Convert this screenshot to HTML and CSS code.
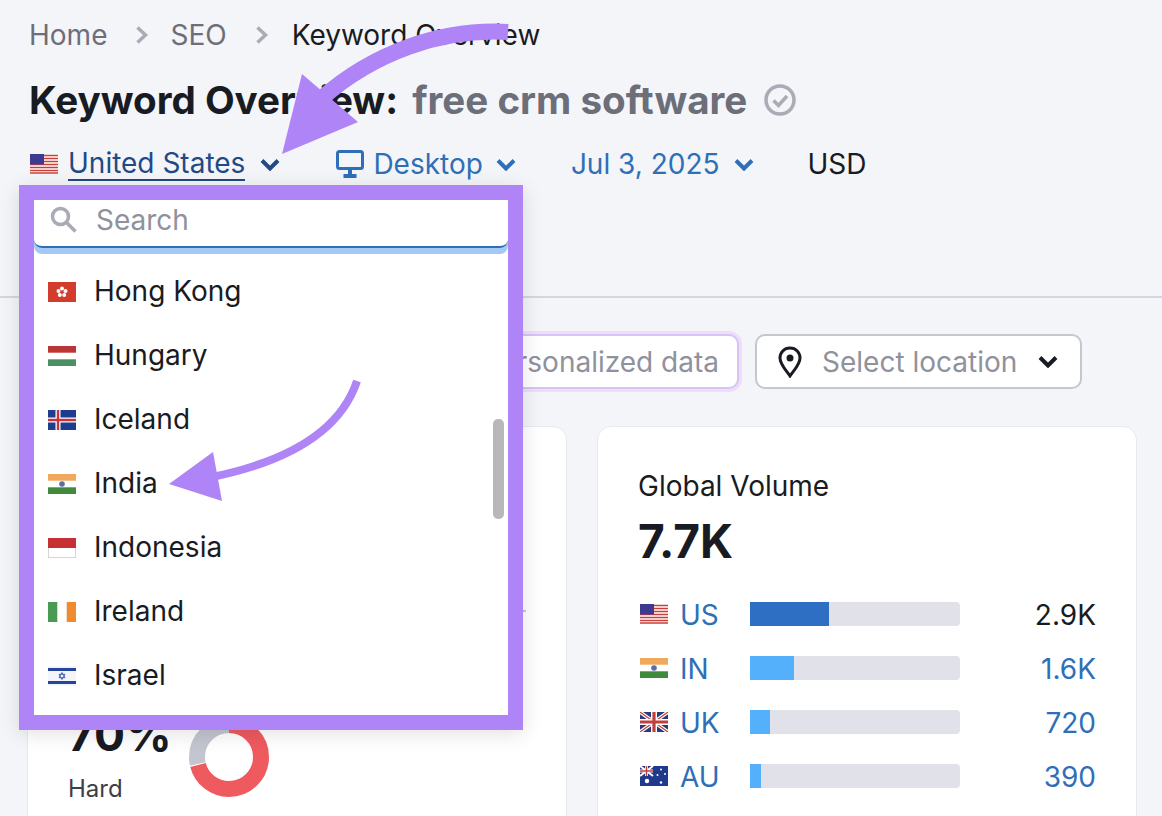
FILE: index.html
```html
<!DOCTYPE html>
<html lang="en">
<head>
    <meta charset="UTF-8">
    <title>Keyword Overview</title>
    <link rel="stylesheet" href="styles.css">
</head>

<body>
    <header class="page-head">
        <nav class="crumbs">
            <span>Home</span>
            <svg class="crumb-sep" viewBox="0 0 14 20"><path d="M2.5 2.500l8 7.500-8 7.500"/></svg>
            <span>SEO</span>
            <svg class="crumb-sep" viewBox="0 0 14 20"><path d="M2.5 2.500l8 7.500-8 7.500"/></svg>
            <span class="crumb-now">Keyword Overview</span>
        </nav>
        <h1 class="title">Keyword Overview: <span class="keyword">free crm software</span>
            <svg class="check" viewBox="0 0 32 32"><circle cx="16" cy="16" r="14"/><path d="M9.500 16.500l5 5 8.500-9.500"/></svg>
        </h1>
        <div class="toolbar">
            <div class="tool tool-country">
                <svg class="flag" viewBox="0 0 28 20"><use href="#flag-us"/></svg>
                <span class="country-name">United States</span>
                <svg class="chev" viewBox="0 0 20 13"><path d="M2 2.500l8 8 8-8"/></svg>
            </div>
            <div class="tool tool-device">
                <svg class="monitor" viewBox="0 0 28 28"><rect x="1.500" y="1.500" width="25" height="17" rx="2"/><path class="monitor-foot" d="M14 19v6M7.500 26h13"/></svg>
                <span>Desktop</span>
                <svg class="chev" viewBox="0 0 20 13"><path d="M2 2.500l8 8 8-8"/></svg>
            </div>
            <div class="tool tool-date">
                <span>Jul 3, 2025</span>
                <svg class="chev" viewBox="0 0 20 13"><path d="M2 2.500l8 8 8-8"/></svg>
            </div>
            <div class="tool tool-currency">USD</div>
        </div>
    </header>

    <main class="content">
        <div class="filters">
            <button class="btn-personal">Get personalized data</button>
            <button class="btn-location">
                <svg class="pin" viewBox="0 0 24 32"><path d="M12 2C6 2 2 6.500 2 12c0 6.500 6 12 10 18 4-6 10-11.500 10-18C22 6.500 18 2 12 2z"/><circle cx="12" cy="12" r="3.500"/></svg>
                <span>Select location</span>
                <svg class="chev-dark" viewBox="0 0 20 13"><path d="M2 2.500l8 8 8-8"/></svg>
            </button>
        </div>

        <div class="cards">
            <section class="card card-left">
                <div class="chart-tick"></div>
                <div class="difficulty">
                    <div>
                        <div class="big-num">70%</div>
                        <div class="hard">Hard</div>
                    </div>
                    <svg class="donut" viewBox="0 0 80 80">
                        <circle class="donut-val" cx="40" cy="40" r="32" pathLength="100" stroke-dasharray="71 29" transform="rotate(-90 40 40)"/>
                        <circle class="donut-bg" cx="40" cy="40" r="32" pathLength="100" stroke-dasharray="28.500 71.500" stroke-dashoffset="-71.500" transform="rotate(-90 40 40)"/>
                    </svg>
                </div>
            </section>

            <section class="card card-right">
                <div class="card-label">Global Volume</div>
                <div class="big-num">7.7K</div>
                <div class="vol-rows">
                    <div class="vol-row">
                        <svg class="flag" viewBox="0 0 28 20"><use href="#flag-us"/></svg>
                        <span class="vol-code">US</span>
                        <div class="vol-bar"><div class="vol-fill vol-fill-main" style="width: 37.600%"></div></div>
                        <span class="vol-num vol-num-dark">2.9K</span>
                    </div>
                    <div class="vol-row">
                        <svg class="flag" viewBox="0 0 28 20"><use href="#flag-in"/></svg>
                        <span class="vol-code">IN</span>
                        <div class="vol-bar"><div class="vol-fill" style="width: 21%"></div></div>
                        <span class="vol-num">1.6K</span>
                    </div>
                    <div class="vol-row">
                        <svg class="flag" viewBox="0 0 28 20"><use href="#flag-uk"/></svg>
                        <span class="vol-code">UK</span>
                        <div class="vol-bar"><div class="vol-fill" style="width: 9.500%"></div></div>
                        <span class="vol-num">720</span>
                    </div>
                    <div class="vol-row">
                        <svg class="flag" viewBox="0 0 28 20"><use href="#flag-au"/></svg>
                        <span class="vol-code">AU</span>
                        <div class="vol-bar"><div class="vol-fill" style="width: 5.200%"></div></div>
                        <span class="vol-num">390</span>
                    </div>
                </div>
            </section>
        </div>
    </main>

    <!-- dropdown with the purple highlight frame -->
    <div class="country-menu">
        <div class="menu-search">
            <svg class="search-icon" viewBox="0 0 30 30"><circle cx="11.500" cy="11.500" r="8"/><path d="M17.500 17.500l9 9"/></svg>
            <span>Search</span>
        </div>
        <ul class="menu-list">
            <li><svg class="flag" viewBox="0 0 28 20"><use href="#flag-hk"/></svg>Hong Kong</li>
            <li><svg class="flag" viewBox="0 0 28 20"><use href="#flag-hu"/></svg>Hungary</li>
            <li><svg class="flag" viewBox="0 0 28 20"><use href="#flag-is"/></svg>Iceland</li>
            <li><svg class="flag" viewBox="0 0 28 20"><use href="#flag-in"/></svg>India</li>
            <li><svg class="flag" viewBox="0 0 28 20"><use href="#flag-id"/></svg>Indonesia</li>
            <li><svg class="flag" viewBox="0 0 28 20"><use href="#flag-ie"/></svg>Ireland</li>
            <li><svg class="flag" viewBox="0 0 28 20"><use href="#flag-il"/></svg>Israel</li>
        </ul>
        <div class="menu-scroll"></div>
    </div>

    <!-- annotation arrows -->
    <svg class="arrows" viewBox="0 0 1162 816">
        <path class="arrow-line" d="M508 32C440 28 372 54 322 98"/>
        <path class="arrow-head" d="M302 74L358 122 282 154z"/>
        <path class="arrow-line arrow-thin" d="M357 381C340 432 285 462 212 477"/>
        <path class="arrow-head" d="M169 484L213 452 222 501z"/>
    </svg>

    <!-- flag sprites -->
    <svg class="sprites">
        <symbol id="flag-us" viewBox="0 0 28 20">
            <rect width="28" height="20" fill="#fff"/>
            <path d="M0 1.500h28M0 4.500h28M0 7.500h28M0 10.500h28M0 13.500h28M0 16.500h28M0 19h28" stroke="#c9403a" stroke-width="1.600"/>
            <rect width="14" height="10.500" fill="#3c3b8f"/>
        </symbol>
        <symbol id="flag-in" viewBox="0 0 28 20">
            <rect width="28" height="20" fill="#fff"/>
            <rect width="28" height="6.700" fill="#f0a85c"/>
            <rect y="13.300" width="28" height="6.700" fill="#3f8a3c"/>
            <circle cx="14" cy="10" r="2.800" fill="#5a6fa8"/>
        </symbol>
        <symbol id="flag-uk" viewBox="0 0 28 20">
            <rect width="28" height="20" fill="#2b3a7c"/>
            <path d="M0 0l28 20M28 0L0 20" stroke="#fff" stroke-width="3.500"/>
            <path d="M0 0l28 20M28 0L0 20" stroke="#c2403c" stroke-width="1.200"/>
            <path d="M14 0v20M0 10h28" stroke="#fff" stroke-width="6"/>
            <path d="M14 0v20M0 10h28" stroke="#c2403c" stroke-width="3.200"/>
        </symbol>
        <symbol id="flag-au" viewBox="0 0 28 20">
            <rect width="28" height="20" fill="#1f3a8a"/>
            <path d="M0 0l13 10M13 0L0 10" stroke="#fff" stroke-width="2"/>
            <path d="M6.500 0v10M0 5h13" stroke="#fff" stroke-width="3"/>
            <path d="M6.500 0v10M0 5h13" stroke="#c2403c" stroke-width="1.500"/>
            <circle cx="7" cy="15" r="2.200" fill="#fff"/>
            <circle cx="21" cy="3.500" r="1" fill="#fff"/>
            <circle cx="25" cy="8" r="1" fill="#fff"/>
            <circle cx="17.500" cy="9" r="1" fill="#fff"/>
            <circle cx="21" cy="16.500" r="1.200" fill="#fff"/>
        </symbol>
        <symbol id="flag-hk" viewBox="0 0 28 20">
            <rect width="28" height="20" fill="#d33c2c"/>
            <circle cx="14" cy="6.500" r="2" fill="#fff"/>
            <circle cx="10.500" cy="9" r="2" fill="#fff"/>
            <circle cx="17.500" cy="9" r="2" fill="#fff"/>
            <circle cx="11.800" cy="13" r="2" fill="#fff"/>
            <circle cx="16.200" cy="13" r="2" fill="#fff"/>
            <circle cx="14" cy="10" r="1" fill="#d33c2c"/>
        </symbol>
        <symbol id="flag-hu" viewBox="0 0 28 20">
            <rect width="28" height="20" fill="#fff"/>
            <rect width="28" height="6.700" fill="#bb3535"/>
            <rect y="13.300" width="28" height="6.700" fill="#4b8f63"/>
        </symbol>
        <symbol id="flag-is" viewBox="0 0 28 20">
            <rect width="28" height="20" fill="#1f3d8f"/>
            <path d="M10 0v20M0 10h28" stroke="#fff" stroke-width="5"/>
            <path d="M10 0v20M0 10h28" stroke="#c8323a" stroke-width="2.400"/>
        </symbol>
        <symbol id="flag-id" viewBox="0 0 28 20">
            <rect width="28" height="20" fill="#fff"/>
            <rect x=".5" y=".5" width="27" height="19" fill="none" stroke="#d5d5d8"/>
            <rect width="28" height="10" fill="#c62f33"/>
        </symbol>
        <symbol id="flag-ie" viewBox="0 0 28 20">
            <rect width="28" height="20" fill="#fff"/>
            <rect width="9.300" height="20" fill="#4a9a54"/>
            <rect x="18.700" width="9.300" height="20" fill="#f08a30"/>
        </symbol>
        <symbol id="flag-il" viewBox="0 0 28 20">
            <rect width="28" height="20" fill="#f4f5fa"/>
            <rect y="2" width="28" height="3" fill="#27459c"/>
            <rect y="15" width="28" height="3" fill="#27459c"/>
            <path d="M14 6.500l3 5.200h-6zM14 13.500l-3-5.200h6z" fill="none" stroke="#3d5bb0" stroke-width=".9"/>
        </symbol>
    </svg>
</body>
</html>
```

FILE: styles.css
```css
* {
    box-sizing: border-box;
}

body {
    margin: 0;
    height: 816px;
    overflow: hidden;
    position: relative;
    background-color: #f4f5f9;
    font-family: Inter, "Liberation Sans", sans-serif;
    color: #191b23;
}

.flag {
    width: 28px;
    height: 20px;
    flex-shrink: 0;
}

.sprites {
    position: absolute;
    width: 0;
    height: 0;
}

/* header */
.page-head {
    height: 298px;
    padding: 16px 29px 0;
    border-bottom: 2px solid #d5d7df;
}

.crumbs {
    display: flex;
    align-items: center;
    height: 38px;
    font-size: 28px;
    color: #6c6e79;
}

.crumb-sep {
    width: 14px;
    height: 20px;
    margin: 0 21px 0 28px;
    fill: none;
    stroke: #a9abb6;
    stroke-width: 3.5;
}

.crumb-now {
    margin-left: 2px;
    color: #191b23;
}

.title {
    display: flex;
    align-items: center;
    margin: 21px 0 0;
    height: 50px;
    font-size: 38.6px;
    font-weight: 700;
    white-space: pre;
}

.keyword {
    margin-left: 5px;
    color: #6c6e79;
}

.check {
    width: 32px;
    height: 32px;
    margin-left: 17px;
    fill: none;
    stroke: #a9abb6;
    stroke-width: 3.5;
}

.toolbar {
    display: flex;
    align-items: center;
    height: 40px;
    margin-top: 19px;
    font-size: 28px;
    color: #2f6fb8;
}

.tool {
    display: flex;
    align-items: center;
}

.tool-country .flag {
    margin-left: 1px;
}

.country-name {
    margin-left: 10px;
    color: #1f4a86;
    border-bottom: 2px solid #1f4a86;
    line-height: 32px;
}

.chev {
    width: 20px;
    height: 13px;
    margin-left: 15px;
    fill: none;
    stroke: #2f6fb8;
    stroke-width: 4;
}

.tool-country .chev {
    stroke: #1f4a86;
}

.tool-device {
    margin-left: 56px;
}

.tool-device .chev {
    margin-left: 13px;
}

.monitor {
    width: 28px;
    height: 28px;
    margin-right: 9px;
    fill: none;
    stroke: #2f6fb8;
    stroke-width: 3;
}

.monitor-foot {
    stroke-width: 4;
}

.tool-date {
    margin-left: 55px;
}

.tool-date .chev {
    margin-left: 14px;
}

.tool-currency {
    margin-left: 54px;
    color: #191b23;
}

/* main area */
.content {
    padding: 0 25px 0 27px;
}

.filters {
    display: flex;
    justify-content: flex-end;
    align-items: center;
    gap: 16px;
    height: 55px;
    margin-top: 36px;
    padding-right: 55px;
}

.filters button {
    height: 55px;
    font-family: inherit;
    font-size: 28px;
    background-color: white;
    border-radius: 10px;
    color: #8f919c;
}

.btn-personal {
    width: 340px;
    padding: 0 18px;
    text-align: right;
    white-space: nowrap;
    border: 2px solid #d9c3f5;
    box-shadow: 0 0 0 3px #ecdffb;
}

.btn-location {
    display: flex;
    align-items: center;
    width: 327px;
    padding: 0 22px 0 21px;
    border: 2px solid #c4c7cf;
}

.pin {
    width: 24px;
    height: 32px;
    margin-right: 20px;
    fill: none;
    stroke: #191b23;
    stroke-width: 3;
}

.pin circle {
    fill: #191b23;
    stroke: none;
}

.chev-dark {
    width: 20px;
    height: 13px;
    margin-left: auto;
    fill: none;
    stroke: #191b23;
    stroke-width: 4;
}

.cards {
    display: flex;
    gap: 30px;
    margin-top: 37px;
}

.card {
    width: 540px;
    height: 420px;
    padding: 40px;
    background-color: white;
    border: 1px solid #e8e9ef;
    border-radius: 14px;
}

.card-left {
    position: relative;
}

.chart-tick {
    position: absolute;
    top: 183px;
    left: 480px;
    width: 18px;
    height: 2px;
    background-color: #c4c7cf;
}

.difficulty {
    position: absolute;
    top: 279px;
    left: 40px;
    display: flex;
    gap: 17px;
    align-items: center;
}

.big-num {
    font-size: 46px;
    font-weight: 700;
    line-height: 56px;
}

.hard {
    font-size: 24px;
    color: #3c3e48;
    line-height: 30px;
    margin-top: 12px;
}

.donut {
    width: 80px;
    height: 80px;
    margin-top: 4px;
    fill: none;
    stroke-width: 16;
}

.donut-bg {
    stroke: #c3c6cf;
}

.donut-val {
    stroke: #ef5a5f;
}

.card-label {
    font-size: 28px;
    line-height: 38px;
}

.card-right .big-num {
    margin-top: 8px;
}

.vol-rows {
    margin: 18px 0 0 2px;
}

.vol-row {
    display: flex;
    align-items: center;
    height: 54px;
    font-size: 28px;
    color: #2f6fb8;
}

.vol-code {
    width: 70px;
    margin-left: 12px;
    padding-top: 2px;
}

.vol-bar {
    width: 210px;
    height: 24px;
    background-color: #e0e1e9;
    border-radius: 0 4px 4px 0;
}

.vol-fill {
    height: 100%;
    background-color: #55b0fb;
}

.vol-fill-main {
    background-color: #2e6fc4;
}

.vol-num {
    margin-left: auto;
    padding-top: 2px;
}

.vol-num-dark {
    color: #191b23;
}

/* dropdown */
.country-menu {
    position: absolute;
    top: 185px;
    left: 19px;
    width: 504px;
    height: 545px;
    background-color: white;
    border: 15px solid #af84f7;
    box-shadow: 0 4px 20px rgba(0, 0, 0, 0.12);
}

.menu-search {
    display: flex;
    align-items: center;
    height: 48px;
    padding: 0 0 7px 15px;
    margin-bottom: 6px;
    font-size: 28px;
    color: #8f919c;
    border-bottom: 2px solid #2f6fb8;
    border-radius: 0 0 8px 8px;
    box-shadow: 0 6px 0 #a5c9f5;
}

.search-icon {
    width: 30px;
    height: 30px;
    margin-right: 17px;
    fill: none;
    stroke: #a9abb6;
    stroke-width: 3.5;
}

.menu-list {
    list-style: none;
    margin: 0;
    padding: 5px 0 0 14px;
}

.menu-list li {
    display: flex;
    align-items: center;
    height: 64px;
    font-size: 28px;
}

.menu-list .flag {
    margin: 2px 18px 0 0;
}

.menu-scroll {
    position: absolute;
    top: 219px;
    right: 4px;
    width: 11px;
    height: 100px;
    background-color: #b8b8b8;
    border-radius: 5px;
}

/* annotation */
.arrows {
    position: absolute;
    top: 0;
    left: 0;
    width: 1162px;
    height: 816px;
    pointer-events: none;
}

.arrow-line {
    fill: none;
    stroke: #af84f7;
    stroke-width: 16;
}

.arrow-thin {
    stroke-width: 8;
}

.arrow-head {
    fill: #af84f7;
}
```
